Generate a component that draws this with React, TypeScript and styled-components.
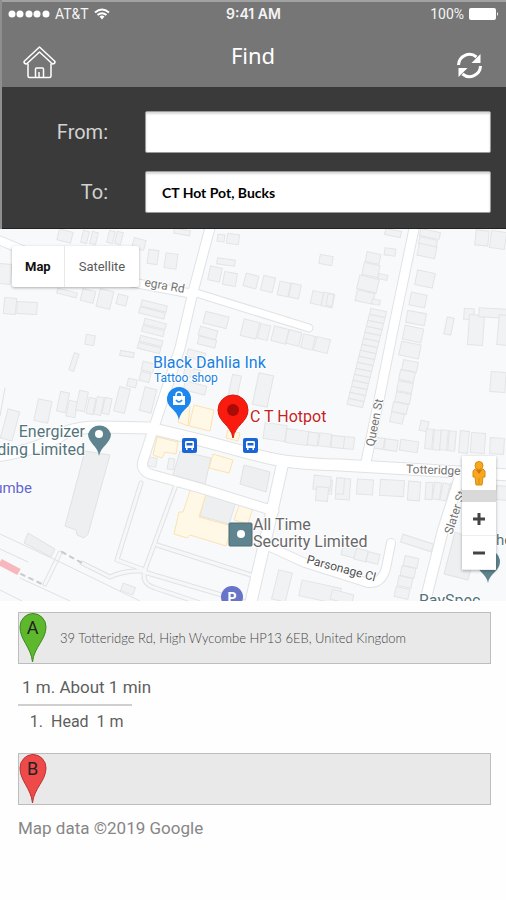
import React from "react";
import styled, { createGlobalStyle } from "styled-components";

const GlobalStyle = createGlobalStyle`
  * { box-sizing: border-box; }
  body { margin: 0; background: #fefefe; font-family: Roboto, "Liberation Sans", sans-serif; }
  button { border: 0; padding: 0; background: none; font: inherit; color: inherit; cursor: pointer; }
  svg { display: block; }
`;

const Page = styled.div`
  min-height: 100vh;
  background: #fefefe;
`;

const Chrome = styled.div`
  border-left: 2px solid #8f8f8f;
`;

const Header = styled.header`
  background: #767676;
  border-top: 2px solid #a2a2a2;
  color: #fff;
  height: 87px;
`;

const StatusBar = styled.div`
  display: grid;
  grid-template-columns: 1fr auto 1fr;
  align-items: center;
  height: 24px;
  padding: 0 7px 0 6px;
  font-size: 14px;
  line-height: 16px;
  color: #f4f4f4;
`;

const StatusGroup = styled.div<{ $end?: boolean }>`
  display: flex;
  align-items: center;
  justify-content: ${(p) => (p.$end ? "flex-end" : "flex-start")};
  gap: 5px;
`;

const Clock = styled.time`
  font: 600 14px/16px Inter, sans-serif;
`;

const NavBar = styled.div`
  display: grid;
  grid-template-columns: 1fr auto 1fr;
  align-items: start;
  padding: 14px 23px 0 21px;
`;

const Title = styled.h1`
  margin: 0;
  font: 400 22px/30px "Noto Sans", sans-serif;
`;

const NavButton = styled.button<{ $end?: boolean }>`
  justify-self: ${(p) => (p.$end ? "end" : "start")};
  padding-top: ${(p) => (p.$end ? "12px" : "6px")};
`;

const RouteForm = styled.form`
  display: grid;
  grid-template-columns: 106px 1fr;
  column-gap: 37px;
  row-gap: 18px;
  padding: 24px 15px 15px 0;
  background: #3a3a3a;
  border-bottom: 1px solid #222;
`;

const FieldLabel = styled.label`
  align-self: center;
  text-align: right;
  color: #d2d2d2;
  font: 400 20px/28px Roboto, sans-serif;
`;

const Field = styled.input`
  width: 100%;
  min-width: 0;
  height: 42px;
  padding: 0 16px;
  border: 1px solid #9a9a9a;
  border-radius: 2px;
  background: #fff;
  box-shadow: inset 0 2px 2px #d9d9d9;
  color: #000;
  font: 700 14px/20px Lato, sans-serif;
`;

const MapPanel = styled.section`
  position: relative;
  height: 372px;
  overflow: hidden;
  background: #f8f9fb;
`;

const MapDrawing = styled.svg`
  width: 100%;
  height: 100%;
`;

const TypeSwitch = styled.div`
  position: absolute;
  top: 17px;
  left: 12px;
  display: flex;
  background: #fff;
  border-radius: 2px;
  box-shadow: 0 1px 3px rgba(0, 0, 0, 0.3);
`;

const TypeButton = styled.button<{ $active?: boolean }>`
  height: 41px;
  padding: 0 ${(p) => (p.$active ? "13px" : "14px")};
  font-size: 13px;
  font-weight: ${(p) => (p.$active ? 700 : 400)};
  color: ${(p) => (p.$active ? "#111" : "#5a5a5a")};
  & + & {
    border-left: 1px solid #e8e8e8;
  }
`;

const Controls = styled.div`
  position: absolute;
  top: 227px;
  right: 10px;
  width: 34px;
  background: #d9d9d9;
  box-shadow: 0 1px 3px rgba(0, 0, 0, 0.3);
`;

const ControlButton = styled.button<{ $gap?: boolean }>`
  display: grid;
  place-items: center;
  width: 100%;
  height: 34px;
  margin-bottom: ${(p) => (p.$gap ? "12px" : "0")};
  background: #fff;
  & + & {
    box-shadow: inset 0 -1px #eee;
  }
`;

const Directions = styled.main`
  padding: 11px 15px 16px 18px;
  color: #5e5e5e;
`;

const Waypoint = styled.div`
  display: flex;
  align-items: center;
  gap: 13px;
  height: 52px;
  border: 1px solid #bdbdbd;
  background: #e9e9e9;
`;

const Address = styled.span`
  color: #444;
  font: 300 13px/20px Lato, sans-serif;
`;

const Summary = styled.p`
  margin: 11px 0 5px;
  padding-left: 4px;
  font-size: 17px;
  line-height: 24px;
`;

const Rule = styled.hr`
  width: 114px;
  height: 2px;
  margin: 0;
  border: 0;
  background: #cfcfcf;
`;

const Steps = styled.ol`
  margin: 4px 0 19px;
  padding-left: 29px;
  font-size: 16px;
  line-height: 24px;
`;

const Step = styled.li`
  padding-left: 4px;
  white-space: pre;
`;

const Credit = styled.p`
  margin: 11px 0 0;
  font-size: 17px;
  line-height: 24px;
  color: #868686;
`;

type Block = [number, number, number, number, number];

const blocks: Block[] = [
  [65, 236, 14, 11, 14], [85, 237, 6, 12, 14], [94, 238, 6, 12, 14], [111, 237, 6, 12, 14], [119, 238, 6, 12, 14],
  [139, 244, 12, 10, 14], [153, 257, 10, 14, 8], [171, 261, 12, 15, 8], [182, 232, 16, 5, 10],
  [5, 274, 12, 20, 5], [10, 306, 12, 16, 5], [27, 308, 20, 12, 3], [67, 293, 20, 5, 14], [88, 296, 13, 12, 14],
  [105, 299, 14, 18, 14], [122, 300, 10, 10, 14], [154, 306, 26, 6, 14], [152, 313, 26, 6, 14], [155, 324, 22, 6, 14],
  [153, 331, 22, 6, 14], [151, 341, 23, 6, 14], [149, 348, 23, 6, 14], [90, 340, 9, 10, 10], [74, 362, 5, 18, 18],
  [127, 354, 14, 5, 10], [148, 367, 12, 9, 14], [145, 377, 10, 9, 14], [132, 383, 9, 8, 14], [148, 400, 12, 24, 14],
  [43, 411, 14, 22, 12], [63, 402, 9, 20, 12], [72, 409, 9, 16, 12], [82, 401, 9, 20, 12], [91, 406, 7, 16, 12],
  [99, 406, 7, 18, 12], [107, 406, 7, 16, 12], [122, 400, 11, 25, 14], [10, 425, 12, 30, 15],
  [221, 238, 7, 7, 8], [233, 239, 12, 10, 8], [226, 262, 18, 6, 8], [215, 274, 12, 14, 12], [230, 279, 13, 13, 10],
  [251, 281, 13, 13, 14], [268, 284, 12, 15, 14], [284, 289, 11, 14, 12], [295, 291, 10, 14, 12], [317, 298, 11, 13, 12],
  [328, 300, 11, 14, 12], [326, 260, 13, 9, 10], [216, 320, 24, 12, 14], [208, 333, 18, 9, 16], [207, 342, 18, 8, 14],
  [250, 329, 16, 17, 14], [264, 332, 10, 15, 14], [280, 335, 15, 15, 14], [294, 338, 13, 14, 14], [308, 342, 12, 14, 14],
  [322, 345, 14, 14, 14], [196, 355, 18, 8, 14], [192, 373, 16, 9, 14], [195, 388, 22, 9, 14], [235, 385, 9, 20, 12],
  [263, 390, 15, 32, 12], [393, 233, 16, 6, 12], [390, 252, 11, 7, 8], [373, 258, 14, 10, 12], [371, 270, 16, 12, 12],
  [383, 277, 9, 5, 14], [368, 284, 20, 14, 14], [365, 297, 18, 11, 12], [376, 302, 8, 5, 12], [430, 234, 20, 7, 12],
  [428, 242, 18, 7, 12], [427, 251, 18, 12, 12], [425, 279, 18, 15, 12], [418, 300, 16, 13, 12], [416, 318, 19, 12, 10],
  [413, 334, 19, 14, 12], [410, 350, 20, 14, 12], [410, 366, 15, 10, 12], [407, 376, 15, 10, 12], [405, 387, 15, 10, 12],
  [403, 398, 15, 10, 12], [400, 408, 15, 10, 12], [397, 418, 13, 10, 12], [449, 326, 7, 17, 12], [482, 238, 13, 15, 6],
  [498, 240, 15, 17, 8], [469, 314, 10, 11, 4], [476, 330, 15, 30, 4], [493, 313, 28, 9, 3], [503, 330, 10, 30, 5],
  [498, 382, 15, 20, 4], [330, 300, 6, 12, 10], [275, 432, 22, 16, 8], [297, 437, 22, 14, 8], [313, 439, 10, 13, 8],
  [325, 440, 12, 13, 8], [338, 442, 13, 12, 6], [349, 443, 10, 12, 6], [377, 443, 14, 11, 8], [391, 445, 13, 11, 8],
  [409, 446, 18, 11, 8], [424, 426, 8, 10, 12], [429, 439, 7, 20, 5], [437, 440, 7, 20, 5], [444, 440, 7, 20, 5],
  [452, 441, 7, 20, 5], [464, 442, 9, 22, 5], [478, 443, 14, 20, 4], [497, 446, 14, 16, 3], [343, 489, 14, 21, 4],
  [329, 487, 6, 14, 4], [365, 487, 16, 15, 4], [392, 488, 24, 16, 3], [414, 491, 12, 19, 4], [429, 491, 7, 17, 4],
  [437, 491, 7, 17, 8], [445, 492, 7, 17, 12], [452, 492, 7, 17, 16], [502, 493, 12, 14, 4], [417, 543, 32, 8, 18],
  [411, 562, 14, 10, 12], [408, 572, 14, 10, 12], [405, 582, 14, 10, 12], [402, 593, 14, 10, 12], [349, 551, 14, 11, 14],
  [361, 555, 12, 11, 14], [373, 558, 12, 10, 14], [322, 483, 17, 14, 6], [322, 494, 12, 14, 4], [340, 486, 8, 16, 4],
  [152, 462, 9, 9, 10], [171, 464, 6, 11, 10], [128, 589, 13, 8, 20], [282, 586, 14, 30, 14], [320, 592, 40, 16, 12],
  [342, 597, 22, 10, 14],
];

const terrace: Block[] = Array.from({ length: 16 }, (_, i) => [378 - i * 1.5, 313 + i * 6, 16, 6, 12]);

const roads: { d: string; w: number }[] = [
  { d: "M-4 239 L30 253 L66 270 L193 294", w: 8 },
  { d: "M211 224 L193 292 L180 348 L153 430 L143 461 Q140 470 150 474 L200 488 L274 511", w: 9 },
  { d: "M193 292 L309 328", w: 7 },
  { d: "M415 224 L394 325 L380 395 L366 462", w: 9 },
  { d: "M-4 456 Q40 450 66 432 Q80 427 100 427 L150 428 L200 440 L260 456 Q290 464 340 465 L510 475", w: 11 },
  { d: "M283 462 L270 520 L250 606", w: 11 },
  { d: "M461 474 L443 530 L424 606", w: 10 },
  { d: "M268 546 L305 563 L368 583 Q382 584 386 568 L391 543", w: 8 },
];

const lanes = [
  "M141 483 L117 560 L145 570 Q141 584 155 588 L200 603",
  "M176 485 L144 572 L252 604",
  "M157 545 L251 575",
  "M60 553 L45 584",
  "M82 563 L110 577 Q125 570 144 571",
];

const Buildings = ({ items }: { items: Block[] }) => (
  <g fill="#f1f2f4" stroke="#e2e4e6">
    {items.map(([cx, cy, w, h, a], i) => (
      <rect key={i} x={cx - w / 2} y={cy - h / 2} width={w} height={h} transform={`rotate(${a} ${cx} ${cy})`} />
    ))}
  </g>
);

const BusStop = ({ x, y }: { x: number; y: number }) => (
  <g transform={`translate(${x} ${y})`}>
    <rect width="15" height="15" rx="2" fill="#1a66d6" />
    <path d="M4 3h7l1 1v6h-1v2H9.500v-2h-4v2H4v-2H3V4z" fill="#fff" />
    <path d="M4.500 5h6v2.500h-6z" fill="#1a66d6" />
  </g>
);

const StreetMap = () => (
  <MapDrawing viewBox="0 229 506 372" preserveAspectRatio="xMidYMid slice" role="img" aria-label="Street map around Totteridge Road">
    <rect y="229" width="506" height="372" fill="#f8f9fb" />
    <Buildings items={blocks} />
    <Buildings items={terrace} />
    <g fill="#eeeff1" stroke="#e0e2e5">
      <path d="M85 451 L110 455 L88 534 L84 538 L77 535 L76 530 L65 526 Z" />
      <path d="M28 533 L55 549 L51 557 L24 543 Z" />
      <path d="M180 451 L211 458 L205 484 L173 475 Z" />
      <path d="M244 465 L270 472 L266 492 L240 484 Z" />
      <path d="M455 532 L478 540 L468 580 L444 574 Z" />
      <path d="M206 492 L236 502 L229 524 L200 516 Z" />
    </g>
    <g fill="#fff8e6" stroke="#fbe3b0">
      <path d="M157 437 L178 442 L176 454 L165 452 L162 458 L153 455 Z" />
      <path d="M213 454 L233 460 L229 473 L209 468 Z" />
      <path d="M182 404 L190 407 L188 426 L178 422 Z" />
      <path d="M194 405 L214 410 L210 431 L189 426 Z" />
      <path d="M191 488 L207 491 L199 517 L232 526 L226 546 L190 535 L187 538 L174 534 L179 512 L183 512 Z" />
      <path d="M240 503 L253 507 L248 524 L234 520 Z" />
      <path d="M228 430 L240 433 L238 441 L226 438 Z" />
    </g>
    <g fill="none" strokeLinecap="round" strokeLinejoin="round">
      <g stroke="#e0e2e5">
        {lanes.map((d) => <path key={d} d={d} strokeWidth="5" />)}
        {roads.map((r) => <path key={r.d} d={r.d} strokeWidth={r.w + 2} />)}
      </g>
      <g>
        {lanes.map((d) => <path key={d} d={d} strokeWidth="3" stroke="#f6f7f8" />)}
        {roads.map((r) => <path key={r.d} d={r.d} strokeWidth={r.w} stroke="#fff" />)}
      </g>
      <path d="M0 534 L60 562 L140 601 M0 549 L28 562 M20 578 L70 601 M0 590 L22 601 M0 416 L5 388" stroke="#dfe1e4" />
      <path d="M62 552 L82 563 M21 574 L44 585" stroke="#c9cccf" strokeWidth="2" strokeDasharray="4 5" />
      <path d="M0 562 L19 572" stroke="#f7b8bd" strokeWidth="7" strokeLinecap="butt" />
    </g>

    <g fontFamily="Roboto, sans-serif" stroke="#fff" strokeWidth="2" paintOrder="stroke" strokeLinejoin="round">
      <g fontSize="12" fill="#737373">
        <text x="144" y="286" transform="rotate(10 144 286)">egra Rd</text>
        <text x="374" y="447" transform="rotate(-79 374 447)">Queen St</text>
        <text x="406" y="473" transform="rotate(2 406 473)">Totteridge</text>
        <text x="452" y="535" transform="rotate(-72 452 535)">Slater St</text>
        <text x="306" y="563" fill="#4f4f4f" transform="rotate(15 306 563)">Parsonage Cl</text>
      </g>
      <g fill="#1a7fe0">
        <text x="153" y="368" fontSize="16">Black Dahlia Ink</text>
        <text x="154" y="382" fontSize="12">Tattoo shop</text>
      </g>
      <text x="250" y="422" fontSize="16" fill="#c5221f">C T Hotpot</text>
      <g fontSize="16" fill="#54737c">
        <text x="85" y="437" textAnchor="end">Energizer</text>
        <text x="85" y="455" textAnchor="end">ding Limited</text>
        <text x="496" y="545" fontSize="15">he</text>
        <text x="419" y="606">RaySpec</text>
      </g>
      <text x="32" y="493" fontSize="15" textAnchor="end" fill="#6366cf">umbe</text>
      <g fontSize="16" fill="#686868">
        <text x="253" y="530">All Time</text>
        <text x="253" y="547">Security Limited</text>
      </g>
    </g>

    <path d="M179 420 C177 409 167 408 167 399 A12 12 0 0 1 191 399 C191 408 181 409 179 420Z" fill="#1d87ee" />
    <path d="M173 396h12v9h-12z" fill="#fff" />
    <path d="M176 397v-2a3 3 0 0 1 6 0v2" fill="none" stroke="#fff" strokeWidth="1.500" />
    <path d="M176 400q3 4 6 0" fill="none" stroke="#1d87ee" strokeWidth="1.500" />

    <path d="M233 438 C231 425 218 422 218 410 A15 15 0 0 1 248 410 C248 422 235 425 233 438Z" fill="#fb1b0e" stroke="#d31a10" />
    <circle cx="233" cy="410" r="6" fill="#a90b06" />

    <path d="M99 456 C98 446 88 443 88 434 A12 12 0 0 1 111 434 C111 443 101 446 99 456Z" fill="#5f848f" />
    <circle cx="99" cy="434" r="4" fill="#fff" />
    <path d="M488 583 C487 574 476 571 476 562 A12 12 0 0 1 500 562 C500 571 489 574 488 583Z" fill="#5f848f" />

    <rect x="229" y="523" width="23" height="23" rx="1" fill="#5f848f" stroke="#4b6d78" />
    <circle cx="241" cy="534" r="4" fill="#fff" />
    <BusStop x={182} y={438} />
    <BusStop x={243} y={438} />
    <circle cx="232" cy="597" r="11" fill="#6874c8" />
    <text x="232" y="603" textAnchor="middle" fontFamily="Roboto, sans-serif" fontWeight="700" fontSize="14" fill="#fff">P</text>
  </MapDrawing>
);

const HomeIcon = () => (
  <svg width="33" height="33" viewBox="0 0 33 33" fill="none" stroke="#fff" strokeWidth="1.500" strokeLinejoin="round">
    <path d="M16.500 1 L32 15.500 Q32 18 29.500 18 L16.500 6 L3.500 18 Q1 18 1 15.500Z" />
    <path d="M5 17.500V30q0 1.500 1.500 1.500h20q1.500 0 1.500-1.500V17.500" />
    <path d="M12.500 31v-8q0-1 1-1h6q1 0 1 1v8M16 31v-5" />
  </svg>
);

const RefreshIcon = () => (
  <svg width="27" height="27" viewBox="0 0 27 27" fill="none" stroke="#fff" strokeWidth="3">
    <path d="M2.500 13A11 11 0 0 1 20.500 5" />
    <path d="M24.500 14A11 11 0 0 1 6.500 22" />
    <path d="M24.500 2v9h-9zM2.500 25v-9h9z" fill="#fff" stroke="none" />
  </svg>
);

const SignalIcon = () => (
  <svg width="42" height="8" viewBox="0 0 42 8" fill="#fff">
    {[4, 12, 21, 29, 38].map((x) => <circle key={x} cx={x} cy="4" r="3.500" />)}
  </svg>
);

const WifiIcon = () => (
  <svg width="16" height="12" viewBox="0 0 16 12" fill="none" stroke="#fff" strokeWidth="2">
    <path d="M1 4.500Q8-1.500 15 4.500M3.500 7Q8 3.500 12.500 7" />
    <path d="M5.500 8.500Q8 6.500 10.500 8.500L8 11.500Z" fill="#fff" stroke="none" />
  </svg>
);

const BatteryIcon = () => (
  <svg width="30" height="12" viewBox="0 0 30 12" fill="#fff">
    <rect width="27" height="12" rx="2" />
    <path d="M28 4q2 2 0 4z" />
  </svg>
);

const Pegman = () => (
  <svg width="16" height="25" viewBox="0 0 16 25" fill="#f7a91e" stroke="#d98a10">
    <path d="M4 8h8l2 2v6h-2l-1 8H5l-1-8H2v-6z" />
    <circle cx="8" cy="4.500" r="4" />
    <path d="M5 9l3 4 3-4z" fill="#e06b1a" stroke="none" />
    <path d="M8 17v6" />
  </svg>
);

const WaypointPin = ({ letter, color, edge }: { letter: string; color: string; edge: string }) => (
  <svg width="28" height="50" viewBox="0 0 28 50" role="img" aria-label={`Waypoint ${letter}`}>
    <path d="M13.500 49 C12 34 1 27 1 14 A12.500 13 0 0 1 27 14 C27 27 15 34 13.500 49Z" fill={color} stroke={edge} />
    <text x="13.500" y="21" textAnchor="middle" fontFamily="Roboto, sans-serif" fontSize="18" fill="#222">{letter}</text>
  </svg>
);

export default function App() {
  return (
    <Page>
      <GlobalStyle />
      <Chrome>
        <Header>
          <StatusBar>
            <StatusGroup>
              <SignalIcon />
              <span>AT&amp;T</span>
              <WifiIcon />
            </StatusGroup>
            <Clock>9:41 AM</Clock>
            <StatusGroup $end>
              <span>100%</span>
              <BatteryIcon />
            </StatusGroup>
          </StatusBar>
          <NavBar>
            <NavButton type="button" aria-label="Home"><HomeIcon /></NavButton>
            <Title>Find</Title>
            <NavButton $end type="button" aria-label="Refresh"><RefreshIcon /></NavButton>
          </NavBar>
        </Header>
        <RouteForm>
          <FieldLabel htmlFor="from">From:</FieldLabel>
          <Field id="from" type="text" />
          <FieldLabel htmlFor="to">To:</FieldLabel>
          <Field id="to" type="text" defaultValue="CT Hot Pot, Bucks" />
        </RouteForm>
      </Chrome>
      <MapPanel>
        <StreetMap />
        <TypeSwitch>
          <TypeButton type="button" $active>Map</TypeButton>
          <TypeButton type="button">Satellite</TypeButton>
        </TypeSwitch>
        <Controls>
          <ControlButton type="button" $gap aria-label="Street View"><Pegman /></ControlButton>
          <ControlButton type="button" aria-label="Zoom in">
            <svg width="14" height="14" viewBox="0 0 14 14" stroke="#444" strokeWidth="3"><path d="M1 7h12M7 1v12" /></svg>
          </ControlButton>
          <ControlButton type="button" aria-label="Zoom out">
            <svg width="14" height="14" viewBox="0 0 14 14" stroke="#444" strokeWidth="3"><path d="M1 7h12" /></svg>
          </ControlButton>
        </Controls>
      </MapPanel>
      <Directions>
        <Waypoint>
          <WaypointPin letter="A" color="#5db82e" edge="#3d8a1c" />
          <Address>39 Totteridge Rd, High Wycombe HP13 6EB, United Kingdom</Address>
        </Waypoint>
        <Summary>1 m. About 1 min</Summary>
        <Rule />
        <Steps>
          <Step>Head  1 m</Step>
        </Steps>
        <Waypoint>
          <WaypointPin letter="B" color="#ee4a4a" edge="#b83232" />
        </Waypoint>
        <Credit>Map data ©2019 Google</Credit>
      </Directions>
    </Page>
  );
}
